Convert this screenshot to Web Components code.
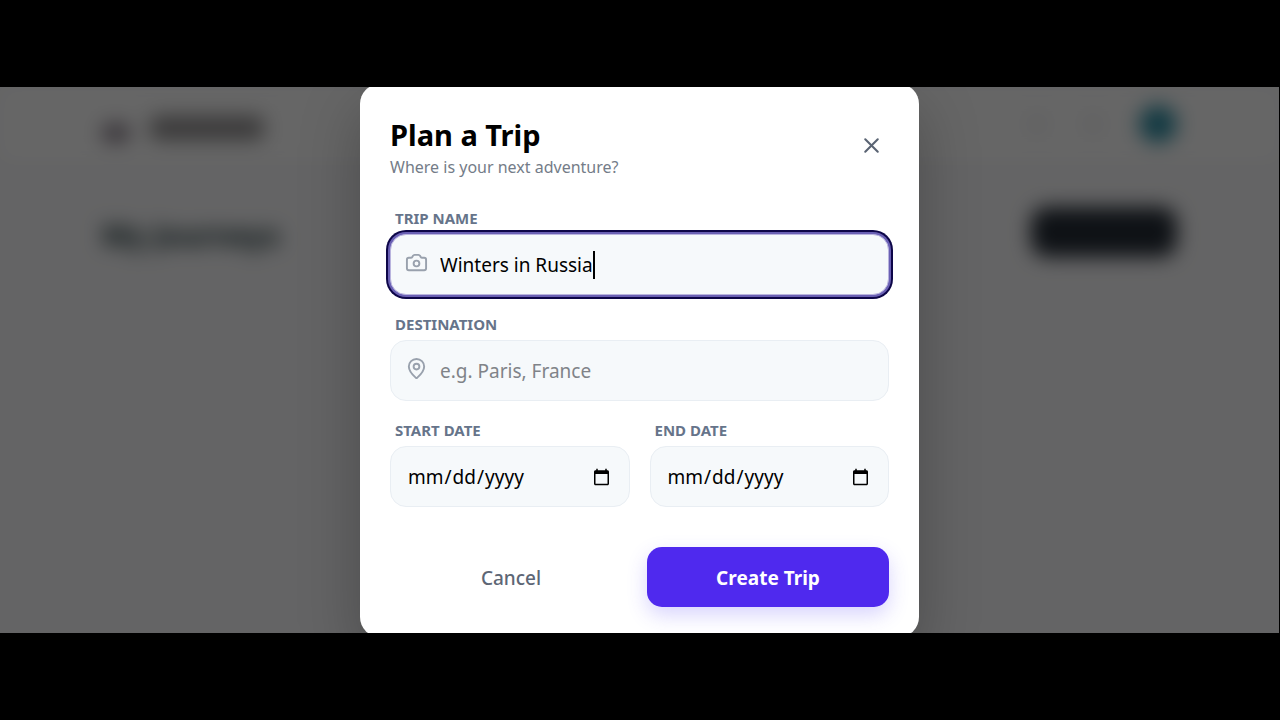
<!DOCTYPE html>
<html lang="en-US">
<head>
<meta charset="utf-8">
<title>Plan a Trip</title>
<style>
body { margin: 0; min-height: 100vh; background: #000; font-family: "Noto Sans", sans-serif; display: grid; align-items: center; }
</style>
</head>
<body>
<app-stage>
  <journeys-page slot="page"></journeys-page>
  <trip-dialog heading="Plan a Trip" subheading="Where is your next adventure?">
    <text-field label="Trip Name" value="Winters in Russia" icon="camera" active></text-field>
    <text-field label="Destination" placeholder="e.g. Paris, France" icon="pin"></text-field>
    <field-row>
      <date-field label="Start Date"></date-field>
      <date-field label="End Date"></date-field>
    </field-row>
    <action-button slot="actions">Cancel</action-button>
    <action-button slot="actions" primary>Create Trip</action-button>
  </trip-dialog>
</app-stage>
<script>
const ICONS = {
  close: '<path d="M18 6 6 18M6 6l12 12"/>',
  camera: '<path d="M13.997 4a2 2 0 0 1 1.76 1.05l.486.9A2 2 0 0 0 18.003 7H20a2 2 0 0 1 2 2v9a2 2 0 0 1-2 2H4a2 2 0 0 1-2-2V9a2 2 0 0 1 2-2h1.997a2 2 0 0 0 1.759-1.048l.489-.904A2 2 0 0 1 10.004 4z"/><circle cx="12" cy="13" r="3"/>',
  pin: '<path d="M20 10c0 4.993-5.539 10.193-7.399 11.799a1 1 0 0 1-1.202 0C9.539 20.193 4 14.993 4 10a8 8 0 0 1 16 0"/><circle cx="12" cy="10" r="3"/>'
};
const icon = name => `<svg viewBox="0 0 24 24" fill="none" stroke="currentColor" stroke-width="2" stroke-linecap="round" stroke-linejoin="round" aria-hidden="true">${ICONS[name]}</svg>`;

class Base extends HTMLElement {
  connectedCallback() {
    if (this.shadowRoot) return;
    this.attachShadow({ mode: 'open' }).innerHTML = `<style>*{box-sizing:border-box}${this.styles()}</style>${this.markup()}`;
    this.ready();
  }
  attr(name) { return this.getAttribute(name) || ''; }
  ready() {}
}

customElements.define('app-stage', class extends Base {
  styles() { return `
    :host { display: grid; grid-template-columns: minmax(0, 1fr); position: relative; height: 546px; margin-right: 1px; overflow: hidden; background: #fafafc; }
    .page { filter: blur(10px); }
    .overlay { position: absolute; inset: 0; background: rgba(0,0,0,.6); display: grid; justify-items: center; align-items: center; align-content: center; }`; }
  markup() { return `<div class="page"><slot name="page"></slot></div><div class="overlay"><slot></slot></div>`; }
});

customElements.define('journeys-page', class extends Base {
  styles() { return `
    :host { display: block; }
    header { display: flex; align-items: center; gap: 20px; height: 74px; padding: 0 102px; background: #fff; }
    .logo { width: 28px; height: 18px; margin-top: 18px; border-radius: 8px; background: #857a87; }
    .brand { width: 114px; height: 24px; margin-top: 8px; border-radius: 8px; background: #918f90; }
    .tool { width: 20px; height: 20px; margin-right: 16px; border-radius: 50%; background: #f1f1f3; }
    .spacer { flex: 1; }
    .avatar { width: 38px; height: 38px; border-radius: 50%; background: #2f90a6; }
    main { display: flex; align-items: center; justify-content: space-between; padding: 46px 102px; }
    h1 { margin: 0; padding-top: 6px; font-size: 29px; line-height: 40px; font-weight: 700; color: #0f292b; }
    .new { width: 146px; height: 50px; border-radius: 16px; background: #252d37; }`; }
  markup() { return `<header><span class="logo"></span><span class="brand"></span><span class="spacer"></span><span class="tool"></span><span class="tool"></span><span class="avatar"></span></header>
    <main><h1>My Journeys</h1><span class="new"></span></main>`; }
});

customElements.define('trip-dialog', class extends Base {
  styles() { return `
    :host { display: block; box-sizing: border-box; width: 100%; max-width: 559px; padding: 30px; border-radius: 20px; background: #fff; color: #000; box-shadow: 0 24px 60px rgba(0,0,0,.25); }
    header { display: flex; align-items: center; justify-content: space-between; margin-bottom: 29px; }
    h2 { margin: 0; font-size: 29px; line-height: 42px; font-weight: 700; }
    p { margin: 0; font-size: 16px; line-height: 22px; color: #747c88; }
    .close { display: grid; padding: 5px; border: 0; background: none; color: #5a6473; }
    svg { width: 25px; height: 25px; }
    form { display: grid; gap: 18px; }
    footer { display: grid; grid-template-columns: 1fr 1fr; gap: 15px; margin-top: 22px; }`; }
  markup() { return `<section role="dialog" aria-labelledby="title">
    <header><div><h2 id="title">${this.attr('heading')}</h2><p>${this.attr('subheading')}</p></div>
    <button class="close" type="button" aria-label="Close">${icon('close')}</button></header>
    <form><slot></slot><footer><slot name="actions"></slot></footer></form></section>`; }
});

customElements.define('field-row', class extends Base {
  styles() { return `:host { display: grid; grid-template-columns: 1fr 1fr; gap: 20px; }`; }
  markup() { return `<slot></slot>`; }
});

const FIELD = `
  :host { display: grid; grid-template-columns: minmax(0, 1fr); gap: 5px; }
  label { padding-left: 5px; font-size: 15px; line-height: 22px; font-weight: 700; color: #66748a; text-transform: uppercase; }
  .box { position: relative; display: flex; align-items: center; gap: 12px; height: 61px; padding: 0 14px; border: 1px solid #e9eef3; border-radius: 16px; background: #f6f9fb; }
  input { flex: 1; min-width: 0; width: 100%; padding: 2px 0 0; border: 0; outline: 0; background: none; color: #000; font-family: inherit; font-size: 19px; line-height: 28px; }
  input::placeholder { color: #808388; opacity: 1; }`;

customElements.define('text-field', class extends Base {
  styles() { return FIELD + `
    svg { flex: none; width: 23px; height: 23px; margin-bottom: 4px; color: #99a1ad; }
    :host([active]) .box { border-color: #b9b4de; box-shadow: 0 0 0 2px #6a60b4, 0 0 0 4px #0d0648; }
    .caret { position: absolute; top: 16px; width: 2px; height: 28px; background: #000; }`; }
  markup() { return `<label for="input">${this.attr('label')}</label>
    <div class="box">${icon(this.attr('icon'))}<input id="input" type="text" value="${this.attr('value')}" placeholder="${this.attr('placeholder')}"></div>`; }
  ready() {
    if (!this.hasAttribute('active')) return;
    const input = this.shadowRoot.querySelector('input');
    const caret = document.createElement('span');
    caret.className = 'caret';
    input.style.caretColor = 'transparent';
    input.after(caret);
    const place = () => {
      const pen = document.createElement('canvas').getContext('2d');
      pen.font = getComputedStyle(input).font;
      caret.style.left = Math.round(input.offsetLeft + pen.measureText(input.value).width) + 'px';
    };
    input.addEventListener('input', place);
    place();
  }
});

customElements.define('date-field', class extends Base {
  styles() { return FIELD + `
    .box { padding: 0 16px; }
    input::-webkit-datetime-edit, input::-webkit-datetime-edit-fields-wrapper { padding: 0; }`; }
  markup() { return `<label for="input">${this.attr('label')}</label><div class="box"><input id="input" type="date"></div>`; }
});

customElements.define('action-button', class extends Base {
  styles() { return `
    :host { display: grid; }
    button { height: 60px; padding: 2px 0 0; border: 0; border-radius: 15px; background: none; color: #5d6675; font-family: inherit; font-size: 19px; line-height: 28px; font-weight: 500; }
    :host([primary]) button { background: #4f29ee; color: #fff; font-weight: 700; box-shadow: 0 8px 20px rgba(79,57,246,.22); }`; }
  markup() { return `<button type="button"><slot></slot></button>`; }
});
</script>
</body>
</html>
